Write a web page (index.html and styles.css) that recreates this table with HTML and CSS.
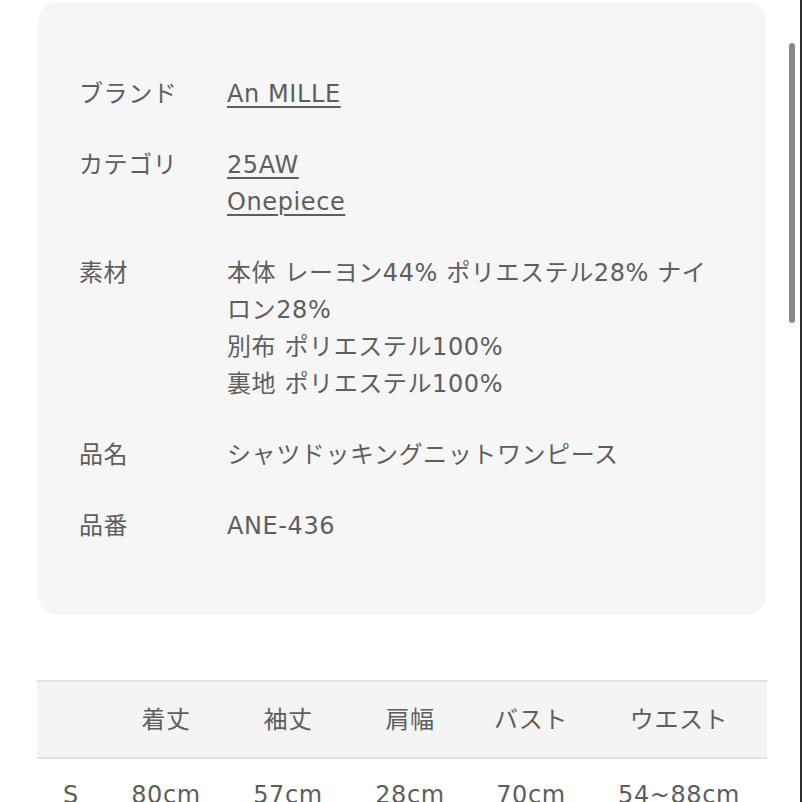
FILE: index.html
```html
<!DOCTYPE html>
<html lang="ja">
<head>
<meta charset="utf-8">
<link rel="stylesheet" href="styles.css">
</head>
<body>
<div class="page">
  <div class="card">
    <dl class="specs">
      <div class="row">
        <dt>ブランド</dt>
        <dd><a href="#">An MILLE</a></dd>
      </div>
      <div class="row">
        <dt>カテゴリ</dt>
        <dd><a href="#">25AW</a><br><a href="#">Onepiece</a></dd>
      </div>
      <div class="row">
        <dt>素材</dt>
        <dd>本体 レーヨン44% ポリエステル28% ナイロン28%<br>別布 ポリエステル100%<br>裏地 ポリエステル100%</dd>
      </div>
      <div class="row">
        <dt>品名</dt>
        <dd>シャツドッキングニットワンピース</dd>
      </div>
      <div class="row">
        <dt>品番</dt>
        <dd>ANE-436</dd>
      </div>
    </dl>
  </div>

  <table class="sizes">
    <colgroup>
      <col class="c0"><col class="c1"><col class="c1"><col class="c1"><col class="c4"><col class="c5">
    </colgroup>
    <thead>
      <tr><th></th><th>着丈</th><th>袖丈</th><th>肩幅</th><th>バスト</th><th>ウエスト</th></tr>
    </thead>
    <tbody>
      <tr><td>S</td><td>80cm</td><td>57cm</td><td>28cm</td><td>70cm</td><td>54~88cm</td></tr>
    </tbody>
  </table>
</div>
<div class="scrollbar"></div>
<div class="edge"></div>
</body>
</html>
```

FILE: styles.css
```css
html, body {
  margin: 0;
  padding: 0;
  background: #ffffff;
  overflow: hidden;
}
body {
  font-family: "DejaVu Sans", "Noto Sans CJK JP", sans-serif;
  font-size: 24px;
  letter-spacing: 0.6px;
  color: #5e5e5e;
}
.page {
  width: 730px;
  padding: 2px 0 0 37px;
}
.card {
  background: #f6f6f6;
  border-radius: 20px;
  margin-left: 1px;
  width: 728px;
  padding: 74px 41px 70px 41px;
  box-sizing: border-box;
  height: 613px;
}
.specs {
  margin: 0;
  display: flex;
  flex-direction: column;
  gap: 34px;
}
.row {
  display: flex;
  line-height: 37px;
}
.row dt {
  width: 148px;
  flex: none;
}
.row dd {
  margin: 0;
  flex: 1;
}
.row a {
  color: #5e5e5e;
  text-decoration: underline;
  text-decoration-thickness: 2px;
  text-underline-offset: 4px;
}
.sizes {
  margin-top: 65px;
  width: 730px;
  border-collapse: collapse;
  table-layout: fixed;
}
.c0 { width: 68px; }
.c1 { width: 122px; }
.c4 { width: 120px; }
.c5 { width: 176px; }
.sizes th {
  background: #f4f4f4;
  font-weight: normal;
  height: 70px;
  padding: 0 0 5px;
  border-top: 2px solid #e2e2e2;
  border-bottom: 2px solid #e2e2e2;
  text-align: center;
}
.sizes td {
  text-align: center;
  padding: 18px 0;
  line-height: 37px;
}
.scrollbar {
  position: fixed;
  left: 789px;
  top: 43px;
  width: 6px;
  height: 280px;
  background: #8a8a8a;
  border-radius: 3px;
}
.edge {
  position: fixed;
  left: 800px;
  top: 0;
  width: 2px;
  height: 802px;
  background: #2e2e2e;
}
```
